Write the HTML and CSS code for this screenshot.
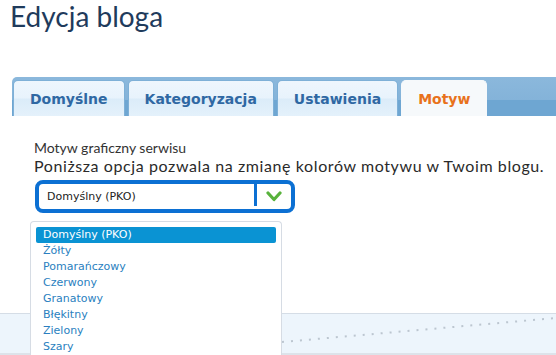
FILE: index.html
```html
<!DOCTYPE html>
<html lang="pl">
<head>
    <meta charset="UTF-8">
    <title>Edycja bloga</title>
    <link rel="stylesheet" href="styles.css">
</head>
<body>
    <h1 class="page-title">Edycja bloga</h1>

    <!-- Tabs -->
    <div class="tabs">
        <div class="tab">Domyślne</div>
        <div class="tab">Kategoryzacja</div>
        <div class="tab">Ustawienia</div>
        <div class="tab active">Motyw</div>
    </div>

    <div class="content">
        <div class="label">Motyw graficzny serwisu</div>
        <div class="hint">Poniższa opcja pozwala na zmianę kolorów motywu w Twoim blogu.</div>

        <div class="select-wrap">
            <div class="select">
                <span class="select-value">Domyślny (PKO)</span>
                <span class="select-arrow">
                    <svg width="16" height="11" viewBox="0 0 16 11">
                        <path d="M2 2 L8 8.5 L14 2" fill="none" stroke="#58b23c" stroke-width="3.2" stroke-linecap="round" stroke-linejoin="round"/>
                    </svg>
                </span>
            </div>

            <!-- Dropdown list -->
            <ul class="options">
                <li class="selected">Domyślny (PKO)</li>
                <li>Żółty</li>
                <li>Pomarańczowy</li>
                <li>Czerwony</li>
                <li>Granatowy</li>
                <li>Błękitny</li>
                <li>Zielony</li>
                <li>Szary</li>
            </ul>
        </div>
    </div>

    <div class="footer-band">
        <svg class="dots" width="556" height="39" viewBox="0 0 556 39">
            <line x1="282" y1="28" x2="556" y2="4" stroke="#bcc6d0" stroke-width="2" stroke-dasharray="2 7"/>
        </svg>
    </div>
</body>
</html>
```

FILE: styles.css
```css
/* Page */
html, body {
    height: 355px;
    overflow: hidden;
}

body {
    margin: 0;
    padding: 0;
    background-color: white;
    font-family: Lato, "Open Sans", sans-serif;
}

.page-title {
    margin: 0;
    padding: 0 0 0 10px;
    height: 77px;
    font-size: 28px;
    font-weight: normal;
    line-height: 32px;
    color: #1f3b5c;
}

/* Tab strip */
.tabs {
    display: flex;
    align-items: flex-end;
    gap: 3px;
    height: 39px;
    margin-left: 12px;
    padding-left: 1px;
    border-top-left-radius: 5px;
    background: linear-gradient(#8bb8dc 0, #84b3d9 58%, #6ea6d2 60%, #6ea6d2 100%);
}

.tab {
    height: 36px;
    box-sizing: border-box;
    padding: 0 16px;
    border: 1px solid #7eb0d7;
    border-bottom: none;
    border-radius: 5px 5px 0 0;
    background: linear-gradient(#eef6fd 0, #e8f3fc 48%, #dbecf9 52%, #e4f1fb 100%);
    font-family: "DejaVu Sans", Verdana, sans-serif;
    font-weight: bold;
    font-size: 14px;
    line-height: 36px;
    color: #2f68a3;
}

.tab.active {
    border-color: #f6f9fb;
    background: #f6f9fb;
    color: #e8721c;
}

/* Content */
.content {
    padding: 24px 0 0 34px;
}

.label {
    font-size: 14px;
    line-height: 16px;
    color: #333;
}

.hint {
    font-size: 16px;
    line-height: 20px;
    letter-spacing: 0.6px;
    color: #2a2a2a;
}

.select-wrap {
    position: relative;
    margin-top: 4px;
    margin-left: 1px;
    width: 260px;
}

.select {
    display: flex;
    height: 33px;
    box-sizing: border-box;
    border: 4px solid #0c70d3;
    border-radius: 8px;
    background: white;
}

.select-value {
    width: 215px;
    padding-left: 8px;
    box-sizing: border-box;
    font-family: "DejaVu Sans", Verdana, sans-serif;
    font-size: 11px;
    line-height: 25px;
    color: #222;
}

.select-arrow {
    flex: 1;
    display: flex;
    align-items: center;
    justify-content: center;
    margin-bottom: 3px;
    border-left: 3px solid #0c70d3;
    padding-top: 2px;
}

/* Dropdown list */
.options {
    position: absolute;
    top: 41px;
    left: -5px;
    width: 252px;
    height: 134px;
    box-sizing: border-box;
    margin: 0;
    padding: 5px 5px 0 5px;
    list-style: none;
    border: 1px solid #d6dce4;
    border-bottom: none;
    border-radius: 4px 4px 0 0;
    background: white;
    overflow: hidden;
    z-index: 2;
}

.options li {
    height: 16px;
    padding-left: 7px;
    font-family: "DejaVu Sans", Verdana, sans-serif;
    font-size: 11px;
    line-height: 16px;
    color: #2a7fc0;
}

.options li.selected {
    background-color: #0a93d3;
    border-radius: 2px;
    color: white;
}

/* Bottom band */
.footer-band {
    margin-top: 100px;
    height: 39px;
    border-top: 1px solid #d5dde6;
    border-bottom: 2px solid #dde3ea;
    background-color: #edf5fc;
}

.dots {
    display: block;
}
```
